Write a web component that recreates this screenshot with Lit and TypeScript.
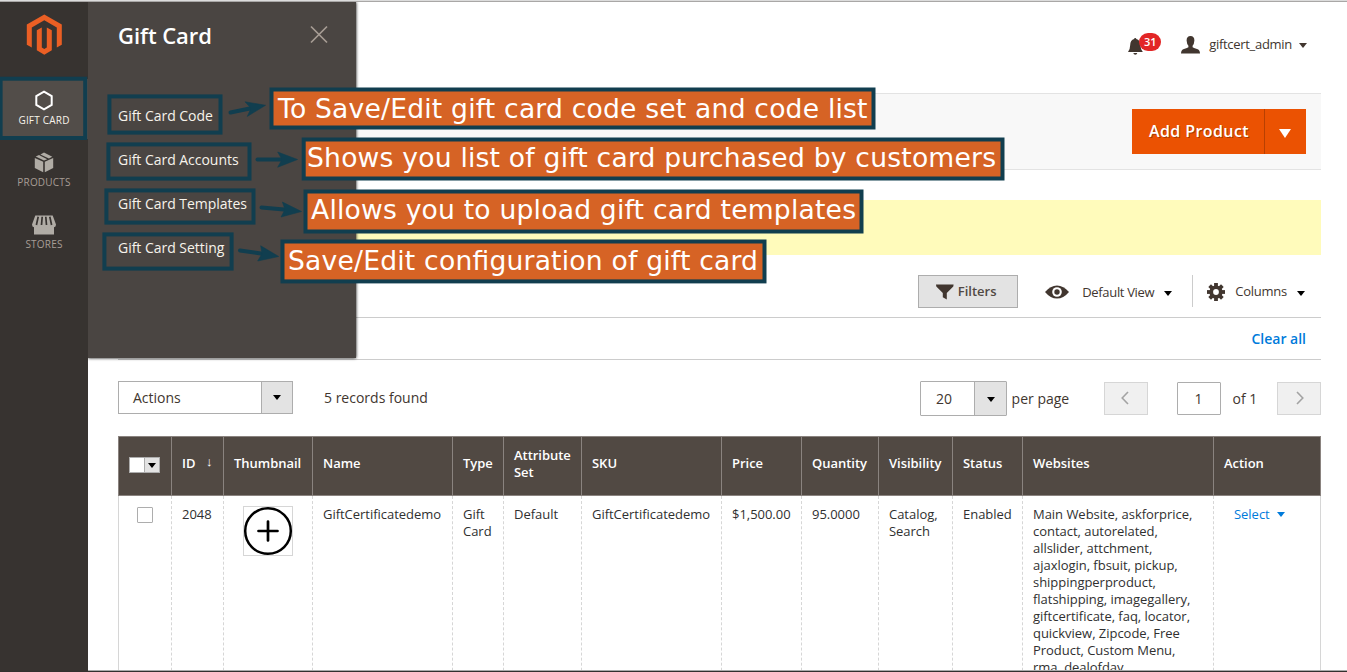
import { LitElement, html, svg, css } from "lit";
import { customElement } from "lit/decorators.js";

type Rect = { x: number; y: number; r: number; b: number };

const menuBoxes: Rect[] = [
  { x: -1.4, y: 76.7, r: 87.2, b: 140 },
  { x: 107.4, y: 94.4, r: 222.5, b: 134.6 },
  { x: 106.4, y: 142.4, r: 251.5, b: 180.6 },
  { x: 104.4, y: 188.4, r: 255.5, b: 224.6 },
  { x: 102.4, y: 232.4, r: 233.6, b: 270.6 },
];

const callouts: (Rect & { tx: number; base: number; w: number; text: string })[] = [
  { x: 269.5, y: 87.5, r: 875.5, b: 129.5, tx: 278, base: 118, w: 589.5, text: "To Save/Edit gift card code set and code list" },
  { x: 301.7, y: 137.5, r: 1004.5, b: 180.5, tx: 307, base: 167, w: 689, text: "Shows you list of gift card purchased by customers" },
  { x: 303.5, y: 189.5, r: 863.5, b: 233.5, tx: 311, base: 219, w: 545, text: "Allows you to upload gift card templates" },
  { x: 280.5, y: 239.5, r: 766.5, b: 283.4, tx: 288, base: 270, w: 470, text: "Save/Edit configuration of gift card" },
];

const arrows = [
  { line: "M230.5 112.5L251 108.3", head: "M265.5 105.3L245 101.8L251 108.3L247.3 116.4Z" },
  { line: "M257.5 159.5H281", head: "M297.5 159.5L277.7 152L282 159.5L277.7 167.2Z" },
  { line: "M261.5 207.4L284 209.5", head: "M301.5 211.5L282.4 202L285 209.6L281 217Z" },
  { line: "M240 250.4L261 253.5", head: "M278.7 256.5L260.7 245.8L262 253.7L257.7 261Z" },
];

const columns = [
  { label: "Thumbnail", value: "" },
  { label: "Name", value: "GiftCertificatedemo" },
  { label: "Type", value: "Gift Card" },
  { label: "Attribute Set", value: "Default" },
  { label: "SKU", value: "GiftCertificatedemo" },
  { label: "Price", value: "$1,500.00" },
  { label: "Quantity", value: "95.0000" },
  { label: "Visibility", value: "Catalog, Search" },
  { label: "Status", value: "Enabled" },
  {
    label: "Websites",
    value:
      "Main Website, askforprice, contact, autorelated, allslider, attchment, ajaxlogin, fbsuit, pickup, shippingperproduct, flatshipping, imagegallery, giftcertificate, faq, locator, quickview, Zipcode, Free Product, Custom Menu, rma, dealofday,",
  },
];

const caret = (w = 8, h = 5) =>
  html`<svg class="caret" width=${w} height=${h} viewBox="0 0 8 5" preserveAspectRatio="none"><path d="M0 0H8L4 5Z" fill="currentColor" /></svg>`;

@customElement("app-root")
export class AppRoot extends LitElement {
  static styles = css`
    :host {
      display: block;
      position: relative;
      width: 1347px;
      height: 672px;
      overflow: hidden;
      box-sizing: border-box;
      background: #fff;
      color: #41362f;
      font: 14px/19px "Open Sans", "Noto Sans", sans-serif;
    }
    * { box-sizing: border-box; }
    svg { display: block; flex: none; }
    .frame {
      display: flex;
      height: 672px;
      border-top: 1px solid #dcdcdc;
      border-bottom: 1px solid #33302e;
    }
    .nav {
      width: 88px;
      background: #373330;
      border-top: 1px solid #a9a7a6;
      flex: none;
    }
    .brand { display: flex; justify-content: center; height: 77px; padding: 12px 0 0 0; }
    .item {
      display: flex;
      flex-direction: column;
      align-items: center;
      height: 62px;
      color: #a79d95;
      font-size: 10px;
      line-height: 12px;
      letter-spacing: 0.2px;
      padding-top: 11px;
    }
    .item svg { margin-bottom: 3px; }
    .active { background: #524d49; color: #f7f3eb; height: 60px; margin-bottom: 2px; }
    .main {
      flex: 1;
      min-width: 0;
      border-top: 1px solid #a9a7a6;
      padding: 0 26px 0 30px;
      overflow: hidden;
    }
    .header {
      display: flex;
      justify-content: flex-end;
      align-items: center;
      height: 91px;
      padding: 0 14px 6px 0;
      font-size: 13px;
    }
    .name { letter-spacing: -0.3px; }
    .bell { position: relative; margin-right: 38px; top: 2px; }
    .count {
      position: absolute;
      left: 11px;
      top: -5px;
      width: 22px;
      height: 18px;
      border-radius: 9px;
      background: #e22626;
      color: #fff;
      font-size: 11px;
      font-weight: 600;
      line-height: 18px;
      text-align: center;
    }
    .user { margin-right: 9px; }
    .header .caret { margin: 2px 0 0 7px; }
    .actions-bar {
      display: flex;
      justify-content: flex-end;
      height: 77px;
      padding: 15px 15px 0 0;
      background: #f8f8f8;
      border: solid #e3e3e3;
      border-width: 1px 0;
    }
    .primary {
      display: flex;
      height: 45px;
      width: 174px;
      background: #eb5202;
      color: #fff;
      font-size: 16px;
      font-weight: 600;
      line-height: 44px;
      letter-spacing: 0.4px;
      text-shadow: 1px 1px 0 rgba(0, 0, 0, 0.3);
    }
    .primary-label { width: 133px; padding-left: 2px; text-align: center; border-right: 1px solid #b84002; }
    .primary-more { flex: 1; display: flex; align-items: center; justify-content: center; padding: 3px 1px 0 0; }
    .notice { height: 55px; margin-top: 30px; background: #fffbbb; }
    .tools {
      display: flex;
      justify-content: flex-end;
      align-items: flex-start;
      height: 63px;
      padding: 20px 16px 0 0;
      border-bottom: 1px solid #ccc;
      font-size: 13px;
      line-height: 33px;
    }
    .filters {
      display: flex;
      width: 100px;
      height: 33px;
      padding: 0 0 0 16.5px;
      align-items: center;
      background: #e3e3e3;
      border: 1px solid #adadad;
      font-weight: 600;
      color: #514943;
      gap: 4px;
    }
    .view { display: flex; align-items: center; justify-content: flex-end; height: 33px; width: 174px; padding-right: 20px; }
    .view span { margin: 2px 10px 0 13px; white-space: nowrap; letter-spacing: -0.33px; }
    .cols { display: flex; align-items: center; height: 32px; border-left: 1px solid #ccc; padding-left: 14px; }
    .cols span { margin: 0 10px 0 10px; letter-spacing: -0.25px; }
    .cols svg:first-child { margin-top: 2px; }
    .tools .caret { color: #000; margin-top: 4px; }
    .chips {
      height: 42px;
      border-bottom: 1px solid #ccc;
      padding: 11px 15px 0 0;
      text-align: right;
      font-weight: 600;
      color: #007bdb;
      font-size: 14px;
    }
    .pager { display: flex; height: 76px; padding-top: 21px; align-items: flex-start; }
    .select {
      display: flex;
      width: 175px;
      height: 33px;
      border: 1px solid #adadad;
      line-height: 32px;
      padding-left: 14px;
    }
    .drop {
      display: flex;
      align-items: center;
      justify-content: center;
      width: 31px;
      margin-left: auto;
      background: #e3e3e3;
      border-left: 1px solid #adadad;
      color: #000;
    }
    .records { margin-left: 31px; line-height: 34px; }
    .size { width: 87px; height: 35px; margin-left: auto; padding-left: 15px; line-height: 34px; border-radius: 1px; }
    .size .drop { width: 32px; padding-top: 1px; }
    .per { margin: 0 0 0 4.6px; width: 92.4px; line-height: 35px; }
    .step {
      display: flex;
      align-items: center;
      justify-content: center;
      width: 44px;
      height: 33px;
      margin-top: 1px;
      background: #f0f0f0;
      border: 1px solid #d6d6d6;
      padding: 0 2px 2px 0;
    }
    .next { padding: 0 0 2px 2px; }
    .page {
      width: 44px;
      height: 33px;
      margin: 1px 0 0 29px;
      border: 1px solid #adadad;
      border-radius: 1px;
      text-align: center;
      line-height: 31px;
      padding-right: 1px;
    }
    .of { width: 56px; padding-left: 11.5px; line-height: 35px; }
    .row {
      display: grid;
      grid-template-columns: 53px 52px 89px 140px 51px 78px 140px 80px 77px 74px 70px 191px 108px;
      width: 1203px;
      font-size: 13px;
      line-height: 17px;
      letter-spacing: -0.03px;
    }
    .head { height: 60px; background: #514943; color: #fff; font-weight: 600; border: solid #8a837f; border-width: 1px 1px 1px 0; }
    .th { display: flex; align-items: center; padding: 0 7px 5px 10px; border-left: 1px solid #8a837f; }
    .body { height: 200px; border-right: 1px solid #d6d6d6; color: #303030; }
    .td { padding: 10px 7px 0 10px; border-left: 1px dashed #d6d6d6; }
    .td.first { border-left-style: solid; padding: 11px 0 0 18px; }
    .thumb { padding: 10px 0 0 19px; }
    .wide { padding-right: 18px; }
    .multi { display: flex; width: 31px; height: 16px; border: 1px solid #adadad; background: #fff; }
    .multi .drop { width: 15px; }
    .th.check { padding: 0 0 2px 10px; }
    .box { width: 16px; height: 16px; border: 1px solid #adadad; border-radius: 1px; background: #fff; }
    .sort { margin: -4px 0 0 10.5px; font-weight: 400; font-size: 13px; }
    .pick { display: flex; align-items: flex-start; color: #007bdb; padding-left: 20px; }
    .pick .caret { margin: 6px 0 0 7px; }
    .flyout {
      position: absolute;
      left: 88px;
      top: 2px;
      width: 268px;
      height: 356px;
      background: #4a4542;
      box-shadow: 0 0 3px #000;
      clip-path: inset(0 -6px -6px 0);
      padding: 19px 28.5px 0 30px;
      color: #f7f3eb;
    }
    .flyout-head { display: flex; justify-content: space-between; height: 85px; }
    .flyout-head svg { margin-top: 1px; }
    .title { font-size: 22px; font-weight: 600; line-height: 28px; color: #fff; letter-spacing: -0.05px; }
    .link { height: 44px; line-height: 19px; letter-spacing: -0.03px; }
    .overlay { position: absolute; left: 0; top: 0; }
    .note { font-family: "DejaVu Sans", sans-serif; font-size: 26.6px; fill: #fff; }
    .edge { height: 1px; position: absolute; left: 88px; right: 0; bottom: 1px; background: #aaa; }
  `;

  private box(b: Rect, fill: string) {
    return svg`<rect x=${b.x + 2} y=${b.y + 2} width=${b.r - b.x - 4} height=${b.b - b.y - 4} fill=${fill} stroke="#113e4f" stroke-width="4" />`;
  }

  render() {
    return html`
      <div class="frame">
        <nav class="nav">
          <div class="brand">
            <svg width="36" height="41" viewBox="0 0 36 41" fill="#eb5f24">
              <path d="M18.3 .5L35.8 10.5V30.7L30.8 33.6V13.4L18.3 6.2L5.8 13.4V33.6L.8 30.7V10.5Z" />
              <path d="M10.8 16.3L15.8 13.4V33.5L18.3 35L20.8 33.5V13.4L25.8 16.3V36.3L18.3 40.7L10.8 36.3Z" />
            </svg>
          </div>
          <div class="item active">
            <svg width="20" height="21" viewBox="0 0 20 21"><path d="M10 1.7L17.7 6.1V14.9L10 19.3L2.3 14.9V6.1Z" fill="none" stroke="#fff" stroke-width="2" /></svg>
            GIFT CARD
          </div>
          <div class="item">
            <svg width="20" height="21" viewBox="0 0 20 21" fill="#b0aca5">
              <path d="M.8 6L9.2 9.8V20.2L.8 16ZM19.2 6L10.8 9.8V20.2L19.2 16ZM1.7 4.6L5 3.1L13.2 7.2L10 8.6ZM6.4 2.4L10 .6L18.3 4.7L14.9 6.4Z" />
            </svg>
            PRODUCTS
          </div>
          <div class="item">
            <svg width="24" height="21" viewBox="0 0 24 21">
              <path d="M3.3 1.5H20.7L24 10.5Q24 13 22 13.2V20.5H2V13.2Q0 13 0 10.5Z" fill="#b0aca5" />
              <path d="M6.2 2.8L4.4 11M10.2 2.8L9.5 11M13.8 2.8L14.5 11M17.8 2.8L19.6 11" stroke="#373330" stroke-width="1.7" />
            </svg>
            STORES
          </div>
        </nav>
        <main class="main">
          <div class="header">
            <div class="bell">
              <svg width="15" height="18" viewBox="0 0 15 18" fill="#41362f"><path d="M7.2 0Q8.3 0 8.3 1.1Q12.3 2 12.4 7Q12.5 11.5 14.8 14H0Q2.1 11.5 2.2 7Q2.3 2 6.1 1.1Q6.1 0 7.2 0ZM5.3 15H9.3Q9 16.8 7.3 16.8Q5.7 16.8 5.3 15Z" /></svg>
              <span class="count">31</span>
            </div>
            <svg class="user" width="19" height="18" viewBox="0 0 19 18" fill="#41362f"><path d="M9.5 0Q13.4 0 13.4 4.6Q13.2 8 11.6 9.8V11.2Q12.4 11.9 16 12.9Q18.9 13.8 19 17.4H0Q.1 13.8 3 12.9Q6.6 11.9 7.4 11.2V9.8Q5.8 8 5.6 4.6Q5.6 0 9.5 0Z" /></svg>
            <span class="name">giftcert_admin</span>${caret()}
          </div>
          <div class="actions-bar">
            <div class="primary">
              <div class="primary-label">Add Product</div>
              <div class="primary-more">${caret(12, 9)}</div>
            </div>
          </div>
          <div class="notice"></div>
          <div class="tools">
            <div class="filters">
              <svg width="18" height="16" viewBox="0 0 18 16" fill="#41362f"><path d="M0 .5H17.6L17.3 2.5L10.8 9V15.6L6.8 13.3V9L.3 2.5Z" /></svg>Filters
            </div>
            <div class="view">
              <svg width="24" height="14" viewBox="0 0 24 14"><path d="M0 7Q5.5 .4 12 .4T24 7Q18.5 13.6 12 13.6T0 7Z" fill="#41362f" /><circle cx="12" cy="7" r="4.8" fill="#fff" /><circle cx="12" cy="7" r="2.7" fill="#41362f" /></svg>
              <span>Default View</span>${caret()}
            </div>
            <div class="cols">
              <svg width="18" height="18" viewBox="-9 -9 18 18">
                <g fill="#41362f">
                  ${[0, 45, 90, 135].map((a) => svg`<rect x="-1.9" y="-9" width="3.8" height="18" transform="rotate(${a})" />`)}
                  <circle r="6.6" />
                </g>
                <circle r="2.9" fill="#fff" />
              </svg>
              <span>Columns</span>${caret()}
            </div>
          </div>
          <div class="chips">Clear all</div>
          <div class="pager">
            <div class="select">Actions<div class="drop">${caret()}</div></div>
            <div class="records">5 records found</div>
            <div class="select size">20<div class="drop">${caret()}</div></div>
            <div class="per">per page</div>
            <div class="step"><svg width="8" height="14" viewBox="0 0 8 14"><path d="M7 1L1.2 7L7 13" fill="none" stroke="#a3a3a3" stroke-width="1.6" /></svg></div>
            <div class="page">1</div>
            <div class="of">of 1</div>
            <div class="step next"><svg width="8" height="14" viewBox="0 0 8 14"><path d="M1 1L6.8 7L1 13" fill="none" stroke="#a3a3a3" stroke-width="1.6" /></svg></div>
          </div>
          <div class="row head">
            <div class="th check"><div class="multi"><div class="drop">${caret()}</div></div></div>
            <div class="th">ID<span class="sort">↓</span></div>
            ${columns.map((c) => html`<div class="th">${c.label}</div>`)}
            <div class="th">Action</div>
          </div>
          <div class="row body">
            <div class="td first"><div class="box"></div></div>
            <div class="td">2048</div>
            ${columns.map((c) =>
              c.value
                ? html`<div class="td ${c.label === "Websites" ? "wide" : ""}">${c.value}</div>`
                : html`<div class="td thumb">
                    <svg width="50" height="50" viewBox="0 0 50 50"><rect x=".5" y=".5" width="49" height="49" fill="#fff" stroke="#d6d6d6" /><circle cx="25" cy="25" r="22.8" fill="none" stroke="#000" stroke-width="2.5" /><path d="M15.5 25H34.5M25 15.5V34.5" stroke="#000" stroke-width="2.7" stroke-linecap="round" /></svg>
                  </div>`
            )}
            <div class="td pick">Select${caret()}</div>
          </div>
        </main>
      </div>
      <div class="edge"></div>
      <aside class="flyout">
        <div class="flyout-head">
          <div class="title">Gift Card</div>
          <svg width="18" height="26" viewBox="0 0 18 26"><path d="M1 4.5L17 20.5M17 4.5L1 20.5" stroke="#a79d95" stroke-width="1.7" /></svg>
        </div>
        <div class="link">Gift Card Code</div>
        <div class="link">Gift Card Accounts</div>
        <div class="link">Gift Card Templates</div>
        <div class="link">Gift Card Setting</div>
      </aside>
      <svg class="overlay" width="1347" height="672" viewBox="0 0 1347 672">
        ${menuBoxes.map((b) => this.box(b, "none"))}
        ${arrows.map((a) => svg`<path d=${a.line} stroke="#113e4f" stroke-width="4" stroke-linecap="round" /><path d=${a.head} fill="#113e4f" stroke="#113e4f" stroke-width="0.6" />`)}
        ${callouts.map((c) => svg`${this.box(c, "#d66325")}<text class="note" x=${c.tx} y=${c.base} textLength=${c.w}>${c.text}</text>`)}
      </svg>
    `;
  }
}
